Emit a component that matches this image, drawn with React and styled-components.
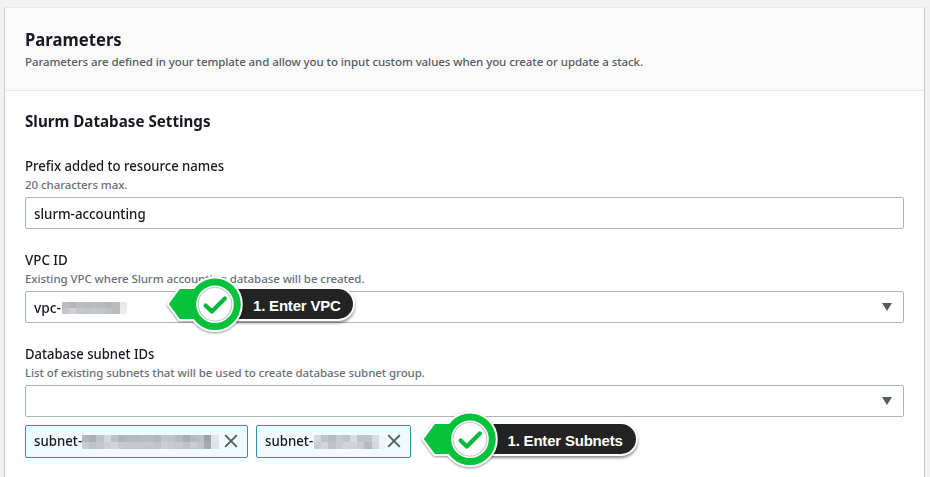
import React from "react";
import styled, { createGlobalStyle } from "styled-components";

const Global = createGlobalStyle`
  * { box-sizing: border-box; }
  body { margin: 0; background: #f2f2f3; font-family: "Noto Sans", sans-serif; color: #16191f; }
`;

const Page = styled.main`
  height: 477px;
  overflow: hidden;
  padding: 7px 5px 0 4px;
`;
const Card = styled.section`
  height: 480px;
  background: #fff;
  border: 1px solid #c9cbcd;
  border-top-color: #e6e9ed;
`;
const Header = styled.header`
  height: 83px;
  padding: 18px 20px 0;
  background: #fafafa;
  border-bottom: 1px solid #e9ebeb;
`;
const Title = styled.h2`
  margin: 0 0 1px;
  font-size: 18px;
  line-height: 26px;
  font-weight: 700;
  white-space: nowrap;
  transform: scaleX(0.927);
  transform-origin: left;
`;
const Body = styled.div`
  padding: 0 20px;
`;
const Section = styled.h3`
  margin: 0;
  padding-top: 19px;
  font-size: 16px;
  line-height: 22px;
  height: 64px;
  white-space: nowrap;
  transform: scaleX(0.948);
  transform-origin: left;
`;
const Hint = styled.p`
  margin: 0;
  font-size: 11.5px;
  line-height: 18px;
  font-weight: 500;
  color: ${(p) => (p.$dark ? "#545b64" : "#687078")};
  white-space: nowrap;
  letter-spacing: -0.075px;
`;
const Field = styled.div`
  height: 94px;
`;
const Label = styled.div`
  font-size: 14px;
  line-height: 22px;
  height: 21px;
  font-weight: 500;
  white-space: nowrap;
  transform: scaleX(${(p) => p.$fit});
  transform-origin: left;
`;
const Control = styled.div`
  position: relative;
  display: flex;
  align-items: center;
  height: 32px;
  margin-top: 3px;
  padding: 0 11px 0 8px;
  border: 1px solid #aab7b8;
  border-radius: 2px;
`;
const Value = styled.span`
  font-size: 14px;
  line-height: 20px;
  font-weight: 500;
  width: ${(p) => p.$w}px;
  margin-top: ${(p) => p.$drop || 0}px;
  flex: none;
  white-space: nowrap;
  transform: scaleX(${(p) => p.$fit || 0.945});
  transform-origin: left;
`;
const Caret = styled.span`
  margin-left: auto;
  border: 5px solid transparent;
  border-top: 8px solid #545b64;
  border-bottom: 0;
`;
const Tokens = styled.div`
  position: relative;
  display: flex;
  gap: 8px;
  margin-top: 8px;
`;
const Token = styled.div`
  display: flex;
  align-items: center;
  width: ${(p) => p.$w}px;
  height: 33px;
  padding: 0 9px 1px 8px;
  border: 1px solid #2c97ae;
  border-radius: 2px;
  background: #f1faff;
`;
const CloseIcon = styled.svg`
  width: 14px;
  height: 14px;
  margin-left: auto;
  fill: none;
  stroke: #545b64;
  stroke-width: 1.9;
`;

const MosaicGrid = styled.span`
  display: grid;
  grid-template-columns: repeat(${(p) => p.$cols}, ${(p) => p.$cell}px);
  grid-auto-rows: ${(p) => p.$row}px;
  margin-top: 2px;
`;
const MosaicCell = styled.i`
  background: ${(p) => p.$tone};
`;

const Callout = styled.div`
  position: absolute;
  left: ${(p) => p.$left}px;
  top: ${(p) => p.$top}px;
  z-index: 2;
  display: flex;
`;
const Marker = styled.svg`
  position: relative;
  z-index: 1;
  flex: none;
  width: 82px;
  height: 64px;
  filter: drop-shadow(0 1.5px 1.2px rgba(0, 0, 0, 0.42));
`;
const Pill = styled.div`
  width: ${(p) => p.$w}px;
  height: 30px;
  margin: 16px 0 0 -32px;
  padding-left: 38px;
  border-radius: 0 15px 15px 0;
  background: #232323;
  color: #fff;
  font: 700 15px/33px "Liberation Sans", Arial, sans-serif;
  letter-spacing: ${(p) => p.$track}px;
  white-space: nowrap;
  box-shadow: 0 0 0 2px #fff, 0 2px 3px 2px rgba(0, 0, 0, 0.45);
`;

function Mosaic({ rows, cell, row }) {
  const tones = rows.join(" ").split(" ");
  return (
    <MosaicGrid $cols={rows[0].split(" ").length} $cell={cell} $row={row}>
      {tones.map((t, i) => (
        <MosaicCell key={i} $tone={`#${t}`} />
      ))}
    </MosaicGrid>
  );
}

function StepCallout({ left, top, width, track, children }) {
  return (
    <Callout $left={left} $top={top}>
      <Marker viewBox="0 0 82 64">
        <g fill="#fff" stroke="#fff" strokeWidth="4" strokeLinejoin="round">
          <path d="M3.8 31 14.8 16H45V46H14.8Z" />
          <circle cx="50" cy="31.3" r="25.8" />
        </g>
        <path d="M3.8 31 14.8 16H45V46H14.8Z" fill="#06c13c" />
        <circle cx="50" cy="31.3" r="25.8" fill="#06c13c" />
        <circle cx="50" cy="31.3" r="18.8" fill="#fff" />
        <circle cx="50" cy="31.3" r="16.8" fill="#fff" stroke="#c9c9ce" strokeWidth="1.2" />
        <path d="M40.6 32.4 46.8 38.6 59.8 25.6" fill="none" stroke="#06b83c" strokeWidth="4.2" strokeLinecap="round" strokeLinejoin="round" />
      </Marker>
      <Pill $w={width} $track={track}>{children}</Pill>
    </Callout>
  );
}

function RemovableToken({ width, textWidth, rows }) {
  return (
    <Token $w={width}>
      <Value $w={textWidth}>subnet-</Value>
      <Mosaic rows={rows} cell={7.2} row={7} />
      <CloseIcon viewBox="0 0 14 14">
        <path d="M1.2 1.2 12.8 12.8M12.8 1.2 1.2 12.8" />
      </CloseIcon>
    </Token>
  );
}

const VPC_MASK = [
  "bdbdbf b6b7b9 bdbec0 b9babc b9babc b9babd b4b5b7 babbbd e8e8ea",
  "c4c5c7 d0d1d3 c5c6c8 c3c4c6 c6c7c9 c4c5c7 bfc0c2 b9babc ededef",
];
const SUBNET_A_MASK = [
  "b1b6ba aaafb4 bfc3c7 d5d9dd bec2c6 b0b4b8 b4b8bc b6babe b9bdc1 b9bdc1 b4b8bc c4c8cc bfc3c7 b7bbbf a9adb3 b8bcc0 bcc0c5 9da2a9 e1e6eb",
  "c7cbcf bfc3c7 c4c8cc cbcfd3 d2d6da c7cbcf c5c9cd c4c8cc c3c7cb c4c8cc bfc3c7 cdd1d5 c8ccd0 c5c9cd bfc3c7 c8ccd0 c0c4c8 a5aab1 dfe3e7",
];
const SUBNET_B_MASK = [
  "d3d6da c2c5c9 b9bcc0 c8cbcf c1c4c8 d9dce0 bfc2c6 c1c4c8 d8dbdf f0f5f9",
  "c9ccd0 d0d3d7 bfc2c6 c9ccd0 d2d5d9 cfd2d6 c9ccd0 b7babe d3d6da eef3f7",
];

export default function App() {
  return (
    <>
      <Global />
      <Page>
        <Card>
          <Header>
            <Title>Parameters</Title>
            <Hint $dark>Parameters are defined in your template and allow you to input custom values when you create or update a stack.</Hint>
          </Header>
          <Body>
            <Section>Slurm Database Settings</Section>
            <Field>
              <Label $fit={0.938}>Prefix added to resource names</Label>
              <Hint>20 characters max.</Hint>
              <Control>
                <Value $drop={2} $fit={0.95}>slurm-accounting</Value>
              </Control>
            </Field>
            <Field>
              <Label $fit={0.955}>VPC ID</Label>
              <Hint>Existing VPC where Slurm accounting database will be created.</Hint>
              <Control>
                <Value $w={28} $drop={2} $fit={0.98}>vpc-</Value>
                <Mosaic rows={VPC_MASK} cell={7.2} row={6} />
                <Caret />
                <StepCallout left={139} top={-19} width={138} track={-0.2}>1. Enter VPC</StepCallout>
              </Control>
            </Field>
            <Field>
              <Label $fit={0.932}>Database subnet IDs</Label>
              <Hint>List of existing subnets that will be used to create database subnet group.</Hint>
              <Control>
                <Caret />
              </Control>
              <Tokens>
                <RemovableToken width={223} textWidth={48} rows={SUBNET_A_MASK} />
                <RemovableToken width={155} textWidth={49} rows={SUBNET_B_MASK} />
                <StepCallout left={394.5} top={-17} width={166} track={-0.2}>1. Enter Subnets</StepCallout>
              </Tokens>
            </Field>
          </Body>
        </Card>
      </Page>
    </>
  );
}
